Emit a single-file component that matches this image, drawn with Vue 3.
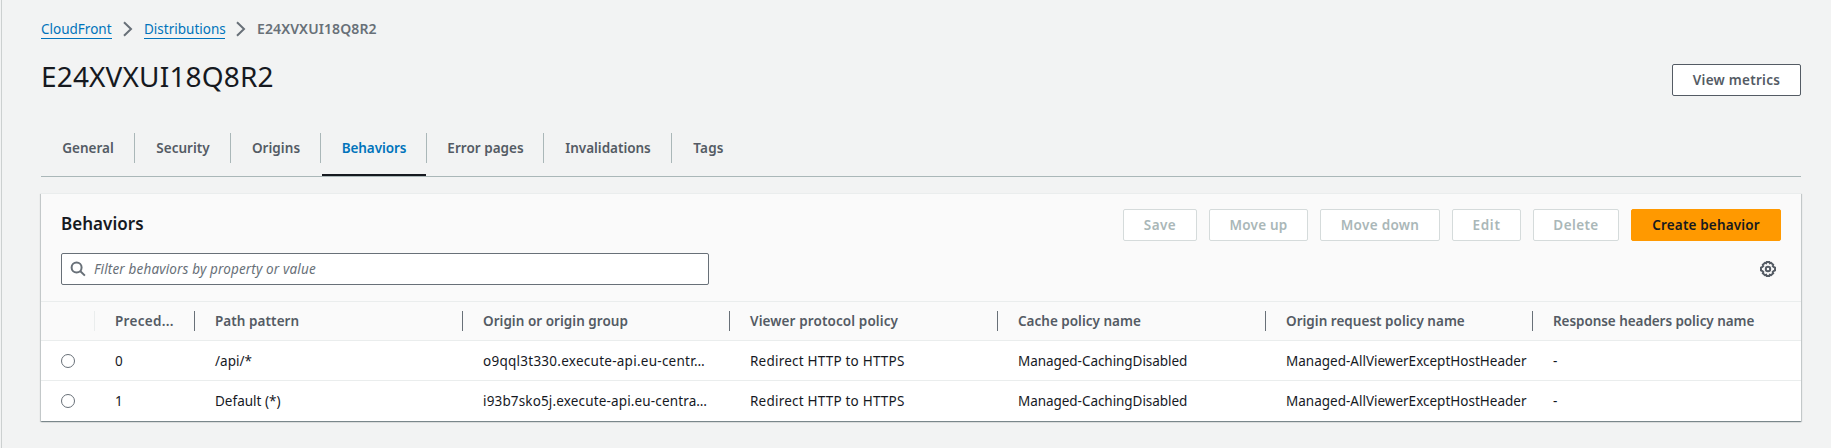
<script setup>
const tabs = [
  { label: 'General', width: 94, ls: 0 },
  { label: 'Security', width: 96, ls: 0.02 },
  { label: 'Origins', width: 90, ls: 0.05 },
  { label: 'Behaviors', width: 106, ls: -0.07, active: true },
  { label: 'Error pages', width: 117, ls: 0.02 },
  { label: 'Invalidations', width: 128, ls: -0.03 },
  { label: 'Tags', width: 72, ls: 0.18 },
]

const actions = [
  { label: 'Save', width: 74, ls: 0.43 },
  { label: 'Move up', width: 99, ls: 0.2 },
  { label: 'Move down', width: 120, ls: 0.3 },
  { label: 'Edit', width: 69, ls: 0.73 },
  { label: 'Delete', width: 86, ls: 0.4 },
  { label: 'Create behavior', width: 150, ls: 0.15, primary: true },
]

const columns = [
  { label: 'Preced...', width: 100, ls: 0.3 },
  { label: 'Path pattern', width: 268, ls: 0.06 },
  { label: 'Origin or origin group', width: 267, ls: 0.03 },
  { label: 'Viewer protocol policy', width: 268, ls: 0.11 },
  { label: 'Cache policy name', width: 268, ls: 0 },
  { label: 'Origin request policy name', width: 267, ls: 0.02 },
  { label: 'Response headers policy name', width: 268, ls: -0.06 },
]

const redirect = { text: 'Redirect HTTP to HTTPS', ls: 0.21 }
const caching = { text: 'Managed-CachingDisabled', ls: -0.05 }
const viewer = { text: 'Managed-AllViewerExceptHostHeader', ls: 0 }
const none = { text: '-', ls: 0 }

const rows = [
  [
    { text: '0', ls: 0 },
    { text: '/api/*', ls: 0.02 },
    { text: 'o9qql3t330.execute-api.eu-centr…', ls: 0.26 },
    redirect, caching, viewer, none,
  ],
  [
    { text: '1', ls: 0 },
    { text: 'Default (*)', ls: 0.01 },
    { text: 'i93b7sko5j.execute-api.eu-centra…', ls: 0.15 },
    redirect, caching, viewer, none,
  ],
]

const spacing = (item) => ({ letterSpacing: item.ls + 'px' })
const sized = (item) => ({ width: item.width + 'px', letterSpacing: item.ls + 'px' })
</script>

<template>
  <div class="page">
    <nav class="breadcrumb">
      <a class="link cloudfront">CloudFront</a>
      <svg class="chevron" width="10" height="16" viewBox="0 0 10 16"><path d="M1 1.3 L8 8 L1 14.7" /></svg>
      <a class="link distributions">Distributions</a>
      <svg class="chevron" width="10" height="16" viewBox="0 0 10 16"><path d="M1 1.3 L8 8 L1 14.7" /></svg>
      <span class="current">E24XVXUI18Q8R2</span>
    </nav>

    <header class="heading">
      <h1>E24XVXUI18Q8R2</h1>
      <button class="btn metrics">View metrics</button>
    </header>

    <div class="tabs">
      <div v-for="tab in tabs" :key="tab.label" class="tab" :class="{ active: tab.active }" :style="sized(tab)">
        <span>{{ tab.label }}</span>
      </div>
    </div>

    <section class="card">
      <div class="card-top">
        <h2>Behaviors</h2>
        <div class="actions">
          <button
            v-for="action in actions"
            :key="action.label"
            class="btn"
            :class="action.primary ? 'primary' : 'disabled'"
            :style="sized(action)"
          >{{ action.label }}</button>
        </div>
      </div>
      <div class="filter-row">
        <div class="filter">
          <svg width="16" height="16" viewBox="0 0 16 16"><circle cx="6.6" cy="6.5" r="5" /><path d="M10.4 10.3 L14.9 14.6" /></svg>
          <span>Filter behaviors by property or value</span>
        </div>
        <svg class="gear" width="16" height="16" viewBox="0 0 16 16">
          <path d="M6.7 1 h2.6 l.5 1.3 1.3-.5 2.1 2 -.5 1.3 .9.9 1.4.6 v2.8 l-1.4.6 -.9.9 .5 1.3 -2.1 2 -1.3-.5 -.5 1.3 h-2.6 l-.5-1.3 -1.3.5 -2.1-2 .5-1.3 -.9-.9 -1.4-.6 v-2.8 l1.4-.6 .9-.9 -.5-1.3 2.1-2 1.3.5 z" />
          <circle cx="8" cy="8" r="2.2" />
        </svg>
      </div>

      <table>
        <colgroup>
          <col class="select-col" />
          <col v-for="col in columns" :key="col.label" :style="{ width: col.width + 'px' }" />
        </colgroup>
        <thead>
          <tr>
            <th class="select"><div class="cell"></div></th>
            <th v-for="col in columns" :key="col.label"><div class="cell" :style="spacing(col)">{{ col.label }}</div></th>
          </tr>
        </thead>
        <tbody>
          <tr v-for="(row, i) in rows" :key="i">
            <td class="select"><span class="radio"></span></td>
            <td v-for="(cell, j) in row" :key="j" :style="spacing(cell)">{{ cell.text }}</td>
          </tr>
        </tbody>
      </table>
    </section>
  </div>
</template>

<style>
body {
  background: #f2f3f3;
}
</style>

<style scoped>
.page {
  box-sizing: border-box;
  width: 1830px;
  height: 448px;
  margin-left: 1px;
  padding: 18px 30px 0 39px;
  border-left: 1px solid #ccd0d0;
  background: #f2f3f3;
  font-family: "Noto Sans", "Open Sans", sans-serif;
  font-size: 13.5px;
  line-height: 22px;
  color: #16191f;
  overflow: hidden;
}
.breadcrumb {
  display: flex;
  align-items: flex-start;
  height: 22px;
}
.link {
  box-sizing: border-box;
  height: 21px;
  line-height: 22px;
  color: #0073bb;
  border-bottom: 1px solid #0073bb;
  white-space: nowrap;
}
.cloudfront {
  width: 71px;
  letter-spacing: 0;
}
.distributions {
  width: 81px;
  letter-spacing: 0;
}
.chevron {
  margin: 3px 11px 0 11px;
}
.chevron path {
  fill: none;
  stroke: #687078;
  stroke-width: 2;
}
.current {
  font-size: 14px;
  font-weight: 600;
  letter-spacing: 0.1px;
  color: #687078;
}
.heading {
  display: flex;
  justify-content: space-between;
  align-items: flex-start;
  margin-top: 20px;
  height: 59px;
}
h1 {
  margin: -2px 0 0;
  font-size: 28px;
  line-height: 36px;
  font-weight: 400;
  letter-spacing: 0.15px;
}
.btn {
  box-sizing: border-box;
  height: 32px;
  padding: 0;
  border: 1px solid #545b64;
  border-radius: 2px;
  background: #fff;
  color: #545b64;
  font: 600 13.5px/20px "Noto Sans", "Open Sans", sans-serif;
  text-align: center;
  white-space: nowrap;
}
.metrics {
  width: 129px;
  margin-top: 4px;
  letter-spacing: 0.27px;
}
.disabled {
  border-color: #d5dbdb;
  color: #aab7b8;
}
.primary {
  border-color: #ff9900;
  background: #ff9900;
  color: #16191f;
}
.tabs {
  display: flex;
  height: 57px;
  border-bottom: 1px solid #aab7b8;
}
.tab {
  box-sizing: border-box;
  padding-top: 14px;
  height: 57px;
}
.tab span {
  display: block;
  height: 30px;
  line-height: 30px;
  padding-left: 1px;
  text-align: center;
  font-weight: 600;
  color: #545b64;
  border-right: 1px solid #aab7b8;
}
.tab:last-child span {
  border-right: none;
}
.tab.active span {
  color: #0073bb;
}
.tab.active {
  background: linear-gradient(#16191f, #16191f) 1px 100% / 104px 2px no-repeat;
}
.card {
  box-sizing: border-box;
  width: 1760px;
  height: 228px;
  margin-top: 16px;
  background: #fff;
  border-top: 1px solid #eaeded;
  box-shadow: 0 1px 1px 0 rgba(0, 28, 36, 0.3), 1px 1px 1px 0 rgba(0, 28, 36, 0.15), -1px 1px 1px 0 rgba(0, 28, 36, 0.15);
}
.card-top {
  display: flex;
  justify-content: space-between;
  padding: 15px 20px 0;
  height: 32px;
  background: #fafafa;
}
h2 {
  margin: 0;
  font-size: 17px;
  line-height: 29px;
  font-weight: 600;
  letter-spacing: 0.03px;
}
.actions {
  display: flex;
  gap: 12px;
}
.filter-row {
  display: flex;
  justify-content: space-between;
  padding: 12px 25px 16px 20px;
  height: 32px;
  background: #fafafa;
}
.filter {
  box-sizing: border-box;
  display: flex;
  align-items: center;
  gap: 8px;
  width: 648px;
  height: 32px;
  padding-left: 8px;
  border: 1px solid #687078;
  border-radius: 2px;
  background: #fff;
  color: #687078;
  font-style: italic;
  letter-spacing: 0.15px;
}
.filter svg {
  fill: none;
  stroke: #687078;
  stroke-width: 2;
}
.gear {
  margin-top: 8px;
  fill: none;
  stroke: #545b64;
  stroke-width: 2;
}
table {
  width: 1760px;
  table-layout: fixed;
  border-collapse: separate;
  border-spacing: 0;
}
.select-col {
  width: 54px;
}
th,
td {
  box-sizing: border-box;
  padding: 0;
  text-align: left;
  white-space: nowrap;
  vertical-align: middle;
}
th {
  height: 40px;
  border-top: 1px solid #eaeded;
  border-bottom: 1px solid #eaeded;
  background: #fafafa;
  font-weight: 600;
  color: #545b64;
}
.cell {
  height: 20px;
  line-height: 20px;
  padding-left: 20px;
  border-right: 1px solid #687078;
}
.select .cell {
  border-right-color: #eaeded;
}
th:last-child .cell {
  border-right: none;
}
td {
  height: 40px;
  padding-left: 20px;
  border-bottom: 1px solid #eaeded;
}
tbody tr:last-child td {
  border-bottom: none;
}
.radio {
  box-sizing: border-box;
  display: block;
  width: 14px;
  height: 14px;
  border: 1px solid #687078;
  border-radius: 50%;
  background: #fff;
}
</style>
